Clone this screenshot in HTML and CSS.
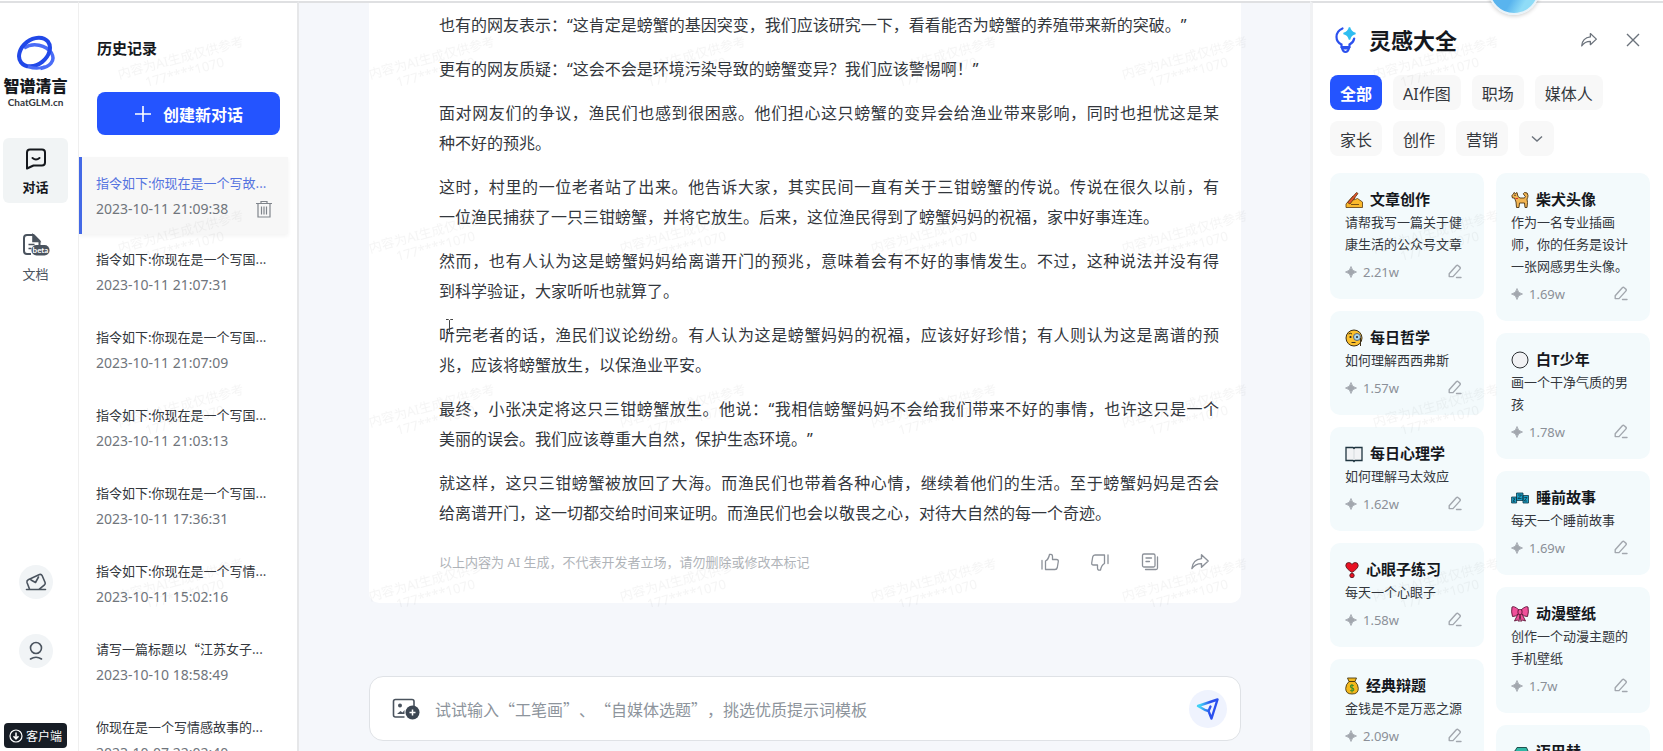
FILE: index.html
```html
<!DOCTYPE html>
<html lang="zh-CN">
<head>
  <meta charset="UTF-8" />
  <meta name="viewport" content="width=device-width, initial-scale=1.0" />
  <title>智谱清言</title>
  <link rel="stylesheet" href="styles.css">
</head>
<body>

  <!-- shared icons -->
  <svg class="sprite" aria-hidden="true">
    <symbol id="icon-share" viewBox="0 0 20 20">
      <path d="M11.5 2.8 18.2 9l-6.7 6.2v-3.6c-4.2 0-7.2 1.4-9.6 5 .4-5.300 3.400-9.300 9.600-10z" fill="none" stroke="currentColor" stroke-width="1.4" stroke-linejoin="round"/>
    </symbol>
    <symbol id="icon-star" viewBox="0 0 12 12">
      <path d="M6 0.500Q6.800 5.200 11.500 6 6.800 6.800 6 11.500 5.200 6.800.5 6 5.200 5.200 6 .5z" fill="currentColor" stroke="currentColor" stroke-width="0.800"/>
    </symbol>
    <symbol id="icon-edit" viewBox="0 0 16 16">
      <path d="M2.200 9.800 9.300 1.800q1-1 2 0l1.500 1.300q1 1 0 2L6 12.600H2.200zM9.500 13.500h4.500" fill="none" stroke="currentColor" stroke-width="1.400" stroke-linecap="round" stroke-linejoin="round"/>
    </symbol>
  </svg>

  <div class="app">
    <nav class="rail">
      <a class="logo" href="#">
        <svg width="40" height="36" viewBox="0 0 40 36" fill="none">
          <path d="M8 13c9-6 22-3 27.500 5 4.500 8-2 14-11 15.500" stroke="#4a6cf7" stroke-width="3.500"/>
          <ellipse cx="18.500" cy="17" rx="17" ry="12.500" transform="rotate(-38 18.500 17)" stroke="#2148e8" stroke-width="4"/>
          <path d="M12 31.500q9 3.500 17 0" stroke="#4a6cf7" stroke-width="3"/>
        </svg>
        <span class="logo-name">智谱清言</span>
        <span class="logo-site">ChatGLM.cn</span>
      </a>

      <a class="tab active" href="#">
        <svg width="22" height="22" viewBox="0 0 22 22" fill="none" stroke="#15181d" stroke-width="2" stroke-linecap="round" stroke-linejoin="round">
          <path d="M5 1.500h12q3 0 3 3v10q0 3-3 3H8.500L2 20.500V4.500q0-3 3-3z"/>
          <path d="M7.500 10q3.500 3 7 0"/>
        </svg>
        <span>对话</span>
      </a>

      <a class="tab" href="#">
        <svg width="28" height="24" viewBox="0 0 28 24" fill="none">
          <path d="M9 21H5q-3 0-3-3V5q0-3 3-3h6.500l6 6v4" stroke="#4a535e" stroke-width="2" stroke-linejoin="round"/>
          <path d="M11 2v6.500h6.500zM6.500 11.500h6M6.500 15.500h3" stroke="#4a535e" stroke-width="1.600" fill="#4a535e"/>
          <rect x="9.500" y="12" width="18" height="10.500" rx="5" fill="#4a535e"/>
          <text x="18.500" y="20" text-anchor="middle" class="beta">beta</text>
        </svg>
        <span>文档</span>
      </a>

      <div class="rail-bottom">
        <button class="round" type="button" aria-label="反馈">
          <svg width="22" height="20" viewBox="0 0 22 20" fill="none" stroke="#4a535e" stroke-width="1.600" stroke-linecap="round" stroke-linejoin="round">
            <path d="M1.500 17.500h19M4.500 17 2 10.500q-.5-2 1.200-2.800L14.500 2.500q1.800-.6 2.600 1l3 7q.5 1.500-.6 2.300L14 17.300M6 8l4.500 2.500L13.500 5"/>
          </svg>
        </button>
        <button class="round" type="button" aria-label="个人中心">
          <svg width="16" height="20" viewBox="0 0 16 20" fill="none" stroke="#4a535e" stroke-width="1.600" stroke-linecap="round">
            <circle cx="8" cy="7" r="5.500"/>
            <path d="M2.500 18q5.500-3.500 11 0"/>
          </svg>
        </button>
        <button class="client" type="button">
          <svg width="14" height="14" viewBox="0 0 14 14" fill="none" stroke="#fff" stroke-width="1.200">
            <circle cx="7" cy="7" r="6"/>
            <path d="M7 3.500v6M4.500 7.200 7 9.800l2.500-2.600" stroke-width="1.500"/>
          </svg>
          客户端
        </button>
      </div>
    </nav>

    <aside class="history">
      <h2>历史记录</h2>
      <button class="new-chat" type="button">
        <svg width="18" height="18" viewBox="0 0 18 18" stroke="#fff" stroke-width="1.600">
          <path d="M9 1v16M1 9h16"/>
        </svg>
        创建新对话
      </button>

      <ul class="history-list">
        <li class="current">
          <a href="#">指令如下:你现在是一个写故...</a>
          <div class="row">
            <time>2023-10-11 21:09:38</time>
            <button class="icon-btn" type="button" aria-label="删除">
              <svg width="18" height="18" viewBox="0 0 18 18" fill="none" stroke="#80858c" stroke-width="1.200">
                <path d="M1 3.500h16M6 3.500v-2h6v2M3 3.500v13.500h12V3.500M6.500 6.500v8M9 6.500v8M11.500 6.500v8"/>
              </svg>
            </button>
          </div>
        </li>
        <li>
          <a href="#">指令如下:你现在是一个写国...</a>
          <time>2023-10-11 21:07:31</time>
        </li>
        <li>
          <a href="#">指令如下:你现在是一个写国...</a>
          <time>2023-10-11 21:07:09</time>
        </li>
        <li>
          <a href="#">指令如下:你现在是一个写国...</a>
          <time>2023-10-11 21:03:13</time>
        </li>
        <li>
          <a href="#">指令如下:你现在是一个写国...</a>
          <time>2023-10-11 17:36:31</time>
        </li>
        <li>
          <a href="#">指令如下:你现在是一个写情...</a>
          <time>2023-10-11 15:02:16</time>
        </li>
        <li>
          <a href="#">请写一篇标题以“江苏女子...</a>
          <time>2023-10-10 18:58:49</time>
        </li>
        <li>
          <a href="#">你现在是一个写情感故事的...</a>
          <time>2023-10-07 22:02:40</time>
        </li>
      </ul>
    </aside>

    <main class="chat">
      <article class="message">
        <div class="message-text">
          <p>也有的网友表示：“这肯定是螃蟹的基因突变，我们应该研究一下，看看能否为螃蟹的养殖带来新的突破。”</p>
          <p>更有的网友质疑：“这会不会是环境污染导致的螃蟹变异？我们应该警惕啊！”</p>
          <p>面对网友们的争议，渔民们也感到很困惑。他们担心这只螃蟹的变异会给渔业带来影响，同时也担忧这是某<span class="keep">种不好</span>的预兆。</p>
          <p>这时，村里的一位老者站了出来。他告诉大家，其实民间一直有关于三钳螃蟹的传说。传说在很久以前，有<span class="keep">一位渔民</span>捕获了一只三钳螃蟹，并将它放生。后来，这位渔民得到了螃蟹妈妈的祝福，家中好事连连。</p>
          <p>然而，也有人认为这是螃蟹妈妈给离谱开门的预兆，意味着会有不好的事情发生。不过，这种说法并没有得<span class="keep">到科学</span>验证，大家听听也就算了。</p>
          <p>听完老者的话，渔民们议论纷纷。有人认为这是螃蟹妈妈的祝福，应该好好珍惜；有人则认为这是离谱的预<span class="keep">兆，应该</span>将螃蟹放生，以保渔业平安。</p>
          <p>最终，小张决定将这只三钳螃蟹放生。他说：“我相信螃蟹妈妈不会给我们带来不好的事情，也许这只是一个<span class="keep">美丽的</span>误会。我们应该尊重大自然，保护生态环境。”</p>
          <p>就这样，这只三钳螃蟹被放回了大海。而渔民们也带着各种心情，继续着他们的生活。至于螃蟹妈妈是否会<span class="keep">给离谱</span>开门，这一切都交给时间来证明。而渔民们也会以敬畏之心，对待大自然的每一个奇迹。</p>
        </div>
        <footer class="message-footer">
          <span>以上内容为 AI 生成，不代表开发者立场，请勿删除或修改本标记</span>
          <div class="actions">
            <button class="icon-btn" type="button" aria-label="赞">
              <svg width="20" height="20" viewBox="0 0 20 20" fill="none" stroke="currentColor" stroke-width="1.300" stroke-linejoin="round" stroke-linecap="round">
                <path d="M2 8.500V17M5.500 9q3-1.500 4-6.500 3-.8 3 2V7.500h4q2 0 1.800 2l-1 6q-.4 2-2.300 2H5.500z"/>
              </svg>
            </button>
            <button class="icon-btn" type="button" aria-label="踩">
              <svg width="20" height="20" viewBox="0 0 20 20" fill="none" stroke="currentColor" stroke-width="1.300" stroke-linejoin="round" stroke-linecap="round">
                <path d="M18 3v8.500M14.500 11.500q-3 1.500-4 6.500-3 .8-3-2v-3h-4q-2 0-1.800-2l1-6q.4-2 2.300-2h9.500z"/>
              </svg>
            </button>
            <button class="icon-btn" type="button" aria-label="复制">
              <svg width="20" height="20" viewBox="0 0 20 20" fill="none" stroke="currentColor" stroke-width="1.300" stroke-linecap="round">
                <rect x="2.500" y="2" width="12.500" height="13" rx="1.500"/>
                <path d="M5.500 17.500H16q1.500 0 1.500-1.500V5M6 6h5.500M6 9.500h3.500"/>
              </svg>
            </button>
            <button class="icon-btn" type="button" aria-label="分享">
              <svg width="20" height="20"><use href="#icon-share"/></svg>
            </button>
          </div>
        </footer>
      </article>

      <form class="composer">
        <button class="icon-btn" type="button" aria-label="上传图片">
          <svg width="28" height="24" viewBox="0 0 28 24" fill="none">
            <path d="M12.500 20H3.500Q1.500 20 1.500 18V4.500q0-2 2-2h16.500q2 0 2 2V9" stroke="#4a535e" stroke-width="1.600"/>
            <circle cx="8" cy="8.500" r="2" fill="#4a535e"/>
            <path d="M5 17l3.500-3 2 1.500 2-2.500v4z" fill="#4a535e"/>
            <circle cx="20.500" cy="15.500" r="7" fill="#3c4652"/>
            <path d="M20.500 12.500v6M17.500 15.500h6" stroke="#fff" stroke-width="1.500"/>
          </svg>
        </button>
        <input type="text" aria-label="输入消息" placeholder="试试输入“工笔画”、“自媒体选题”，挑选优质提示词模板">
        <button class="send" type="submit" aria-label="发送">
          <svg width="24" height="24" viewBox="0 0 24 24" fill="none" stroke-width="2.400" stroke-linejoin="round" stroke-linecap="round">
            <defs>
              <linearGradient id="send-line" x1="2" y1="9" x2="14" y2="10" gradientUnits="userSpaceOnUse">
                <stop offset="0.200" stop-color="#3fd0f5"/>
                <stop offset="1" stop-color="#2b50ee"/>
              </linearGradient>
            </defs>
            <path d="M12.500 14 9.500 13.200 2 9 21.500 2.500 15.500 21.500 12.500 14 14.500 9.500" stroke="url(#send-line)"/>
          </svg>
        </button>
      </form>
    </main>

    <aside class="ideas">
      <header class="ideas-header">
        <svg width="24" height="28" viewBox="0 0 24 28" fill="none">
          <path d="M8.500 2.500Q2.500 5 2.500 11q0 5 5 7.500V21h8v-2.500q4-2 4.700-6" stroke="#2b50ee" stroke-width="2.200" stroke-linecap="round"/>
          <path d="M8 22.500q1 3.500 3.500 3.500t3.500-3.500z" stroke="#2b50ee" stroke-width="2" fill="none"/>
          <path d="M15.500 1.500q1 5 6 6-5 1-6 6-1-5-6-6 5-1 6-6z" fill="#2fbdf0" stroke="#2fbdf0" stroke-width="1.500"/>
        </svg>
        <h1>灵感大全</h1>
        <button class="icon-btn" type="button" aria-label="分享">
          <svg width="18" height="18"><use href="#icon-share"/></svg>
        </button>
        <button class="icon-btn" type="button" aria-label="关闭">
          <svg width="16" height="16" viewBox="0 0 16 16" stroke="currentColor" stroke-width="1.400">
            <path d="M2 2l12 12M14 2 2 14"/>
          </svg>
        </button>
      </header>

      <div class="chips">
        <button class="chip selected" type="button">全部</button>
        <button class="chip" type="button">AI作图</button>
        <button class="chip" type="button">职场</button>
        <button class="chip" type="button">媒体人</button>
        <button class="chip" type="button">家长</button>
        <button class="chip" type="button">创作</button>
        <button class="chip" type="button">营销</button>
        <button class="chip more" type="button" aria-label="更多">
          <svg width="12" height="8" viewBox="0 0 12 8" fill="none" stroke="#6b727b" stroke-width="1.400"><path d="M1 1.500l5 4.500 5-4.500"/></svg>
        </button>
      </div>

      <div class="columns">
        <div class="column">
          <section class="card">
            <h3>
              <svg width="18" height="18" viewBox="0 0 18 18" stroke="#5a3a10" stroke-width="0.800" stroke-linejoin="round">
                <path d="M1 16.500V13l7-8 2 1.500L8.500 9l4-1.500 5 3.500v5.500z" fill="#fbb92c"/>
                <path d="M2.500 11.500 11.500 1.500l1.500 1-8 10.500z" fill="#e4502e"/>
                <path d="M6 13.500h8" fill="none"/>
              </svg>
              文章创作
            </h3>
            <p>请帮我写一篇关于健康生活的公众号文章</p>
            <div class="meta">
              <span><svg width="12" height="12"><use href="#icon-star"/></svg>2.21w</span>
              <button class="icon-btn" type="button" aria-label="编辑"><svg width="16" height="16"><use href="#icon-edit"/></svg></button>
            </div>
          </section>
          <section class="card">
            <h3>
              <svg width="18" height="18" viewBox="0 0 18 18">
                <circle cx="9" cy="9" r="8" fill="#fbc02d" stroke="#3c3019"/>
                <circle cx="12" cy="8" r="3.500" fill="#a9d6ee" stroke="#5b6470"/>
                <circle cx="12" cy="8" r="1" fill="#222"/>
                <circle cx="5.500" cy="8" r="1.100" fill="#222"/>
                <path d="M3.500 5q2-1.500 3.500 0M6.500 13.500h4M15.500 9v8" stroke="#3c3019" fill="none"/>
              </svg>
              每日哲学
            </h3>
            <p>如何理解西西弗斯</p>
            <div class="meta">
              <span><svg width="12" height="12"><use href="#icon-star"/></svg>1.57w</span>
              <button class="icon-btn" type="button" aria-label="编辑"><svg width="16" height="16"><use href="#icon-edit"/></svg></button>
            </div>
          </section>
          <section class="card">
            <h3>
              <svg width="18" height="18" viewBox="0 0 18 18">
                <path d="M1 2.500h7l1 1 1-1h7v13h-7l-1 1-1-1H1z" fill="#f2f3f5" stroke="#1f3540" stroke-width="1.300"/>
                <path d="M9 4.500v10" stroke="#d5dadd"/>
              </svg>
              每日心理学
            </h3>
            <p>如何理解马太效应</p>
            <div class="meta">
              <span><svg width="12" height="12"><use href="#icon-star"/></svg>1.62w</span>
              <button class="icon-btn" type="button" aria-label="编辑"><svg width="16" height="16"><use href="#icon-edit"/></svg></button>
            </div>
          </section>
          <section class="card">
            <h3>
              <svg width="14" height="18" viewBox="0 0 14 18" fill="#e81224" stroke="#4a1015" stroke-width="0.800">
                <path d="M7 11.500Q.8 7.500.8 4.500.8 1.500 3.800 1.500 6 1.500 7 3.500 8 1.500 10.200 1.500q3 0 3 3 0 3-6.200 7z"/>
                <circle cx="7" cy="14.500" r="2.200"/>
              </svg>
              心眼子练习
            </h3>
            <p>每天一个心眼子</p>
            <div class="meta">
              <span><svg width="12" height="12"><use href="#icon-star"/></svg>1.58w</span>
              <button class="icon-btn" type="button" aria-label="编辑"><svg width="16" height="16"><use href="#icon-edit"/></svg></button>
            </div>
          </section>
          <section class="card">
            <h3>
              <svg width="14" height="18" viewBox="0 0 14 18" stroke="#4a3a10" stroke-width="0.900">
                <path d="M2.500 1h9L10 4.500H4zM4 4.500Q.7 7.500.7 11.500q0 5.500 6.300 5.500t6.300-5.500q0-4-3.300-7z" fill="#f3b81c"/>
                <path d="M8.800 8.500Q5 7.500 5.500 9.800q.3 1 1.800 1.300 1.700.4 1.500 1.700-.5 1.700-3.600.7M7 7v8.500" fill="none" stroke="#3f8f2a" stroke-width="1.100"/>
              </svg>
              经典辩题
            </h3>
            <p>金钱是不是万恶之源</p>
            <div class="meta">
              <span><svg width="12" height="12"><use href="#icon-star"/></svg>2.09w</span>
              <button class="icon-btn" type="button" aria-label="编辑"><svg width="16" height="16"><use href="#icon-edit"/></svg></button>
            </div>
          </section>
        </div>

        <div class="column">
          <section class="card">
            <h3>
              <svg width="18" height="18" viewBox="0 0 18 18">
                <path d="M.8 4.500 2.500 3 3 1.500l1.500 1 1.500-1L7 5.500l2 1.500h4.500Q15.500 5 13 4q-1.500-1.500.5-2.500 3.500-.5 3.500 3 0 2-1 3.500l.5 3.500-.5 5h-2l-.5-4.500H8.500l-.5 4.500H5.500L5 11 3.500 7H1.500z" fill="#f2b552" stroke="#4a3312" stroke-width="0.900" stroke-linejoin="round"/>
                <circle cx="4" cy="4.300" r="0.700" fill="#222"/>
                <path d="M4.500 7.500h2.500" stroke="#d9342b"/>
              </svg>
              柴犬头像
            </h3>
            <p>作为一名专业插画师，你的任务是设计一张网感男生头像。</p>
            <div class="meta">
              <span><svg width="12" height="12"><use href="#icon-star"/></svg>1.69w</span>
              <button class="icon-btn" type="button" aria-label="编辑"><svg width="16" height="16"><use href="#icon-edit"/></svg></button>
            </div>
          </section>
          <section class="card">
            <h3>
              <svg width="18" height="18" viewBox="0 0 18 18"><circle cx="9" cy="9" r="8" fill="#f1f2f4" stroke="#2b2f33"/></svg>
              白T少年
            </h3>
            <p>画一个干净气质的男孩</p>
            <div class="meta">
              <span><svg width="12" height="12"><use href="#icon-star"/></svg>1.78w</span>
              <button class="icon-btn" type="button" aria-label="编辑"><svg width="16" height="16"><use href="#icon-edit"/></svg></button>
            </div>
          </section>
          <section class="card">
            <h3>
              <svg width="18" height="18" viewBox="0 0 18 18" fill="#1b9dc4" stroke="#0e3644" stroke-width="0.800">
                <path d="M.6 8h5v6h-5zM5.500 4h6.500v7.500H5.500zM12 6.500h5.500V14H12z"/>
                <path d="M2 9.800h2L2 12.300h2M7 6h3.500L7 9.500h3.500M13.300 8.500h2.700l-2.700 3.500H16" fill="none"/>
              </svg>
              睡前故事
            </h3>
            <p>每天一个睡前故事</p>
            <div class="meta">
              <span><svg width="12" height="12"><use href="#icon-star"/></svg>1.69w</span>
              <button class="icon-btn" type="button" aria-label="编辑"><svg width="16" height="16"><use href="#icon-edit"/></svg></button>
            </div>
          </section>
          <section class="card">
            <h3>
              <svg width="18" height="18" viewBox="0 0 18 18" fill="#f0509a" stroke="#5c1236" stroke-width="0.900" stroke-linejoin="round">
                <path d="M7.500 8 3.500 16l3-1 1.500 1.500L9 9l1 7.500 1.500-1.500 3 1-4-8z"/>
                <path d="M8 5Q3 .5 1 2q-1 5 .5 9.500Q4 12 8 8.500zM10 5q5-4.500 7-3 1 5-.5 9.500-2.500.5-6.500-3z"/>
                <rect x="7" y="4.500" width="4" height="5" rx="1.500"/>
              </svg>
              动漫壁纸
            </h3>
            <p>创作一个动漫主题的手机壁纸</p>
            <div class="meta">
              <span><svg width="12" height="12"><use href="#icon-star"/></svg>1.7w</span>
              <button class="icon-btn" type="button" aria-label="编辑"><svg width="16" height="16"><use href="#icon-edit"/></svg></button>
            </div>
          </section>
          <section class="card">
            <h3>
              <svg width="18" height="18" viewBox="0 0 18 18" stroke="#12423e" stroke-width="0.900">
                <path d="M1 14V9.500L4 8l2-3.500h9.500L17 8v6z" fill="#2fb8a6"/>
                <circle cx="5" cy="14" r="2" fill="#333"/>
                <circle cx="13.500" cy="14" r="2" fill="#333"/>
              </svg>
              迈巴赫
            </h3>
          </section>
        </div>
      </div>
    </aside>
  </div>

  <div class="bubble"></div>

  <svg class="pointer" width="9" height="16" viewBox="0 0 9 16" fill="none" stroke="#444" aria-hidden="true">
    <path d="M1 1.500h2.500l1 1 1-1H8M4.500 2.500v11M1 14.500h2.500l1-1 1 1H8"/>
  </svg>

  <!-- watermark over the whole page -->
  <svg class="watermark" aria-hidden="true">
    <defs>
      <pattern id="mark" x="115" y="30" width="251" height="174" patternUnits="userSpaceOnUse">
        <g transform="rotate(-15 68 36)">
          <text x="68" y="32" text-anchor="middle">内容为AI生成仅供参考</text>
          <text x="68" y="47" text-anchor="middle">177****1070</text>
        </g>
      </pattern>
    </defs>
    <rect width="100%" height="100%" fill="url(#mark)"/>
  </svg>

</body>
</html>
```
FILE: styles.css
```css
* {
  box-sizing: border-box;
}

body {
  margin: 0;
  font-family: "Noto Sans", "Noto Sans CJK SC", sans-serif;
  font-size: 13px;
  color: #33373d;
  background: #fff;
  overflow: hidden;
}

h1, h2, h3, p, ul {
  margin: 0;
  padding: 0;
}

a {
  color: inherit;
  text-decoration: none;
}

button {
  font: inherit;
  color: inherit;
  border: none;
  background: none;
  padding: 0;
  cursor: pointer;
}

svg {
  display: block;
  flex: none;
}

.sprite {
  position: absolute;
  width: 0;
  height: 0;
}

.icon-btn {
  display: flex;
}

.app {
  display: flex;
  height: 100vh;
  padding-top: 1px;
}

.app > * {
  border-top: 2px solid #dfe0e2;
}

/* left rail */
.rail {
  width: 79px;
  flex: none;
  display: flex;
  flex-direction: column;
  align-items: flex-start;
  padding: 32px 0 3px 3px;
  border-right: 1px solid #efefef;
}

.logo {
  width: 65px;
  display: flex;
  flex-direction: column;
  align-items: center;
  margin-bottom: 30px;
}

.logo-name {
  margin-top: 5px;
  font-size: 16px;
  line-height: 20px;
  font-weight: 900;
  color: #15181d;
}

.logo-site {
  font-family: Lato, sans-serif;
  font-size: 10px;
  line-height: 12px;
  font-weight: bold;
}

.tab {
  width: 65px;
  height: 65px;
  display: flex;
  flex-direction: column;
  align-items: center;
  justify-content: center;
  gap: 7px;
  padding-top: 2px;
  border-radius: 6px;
  margin-bottom: 21px;
  color: #4a535e;
}

.tab.active {
  background: #f1f4f5;
  color: #15181d;
  font-weight: bold;
}

.beta {
  font-family: Lato, sans-serif;
  font-size: 8px;
  font-weight: bold;
  fill: #fff;
}

.rail-bottom {
  width: 65px;
  margin-top: auto;
  display: flex;
  flex-direction: column;
  align-items: center;
}

.round {
  width: 34px;
  height: 34px;
  border-radius: 50%;
  background: #f1f4f6;
  display: flex;
  align-items: center;
  justify-content: center;
  margin-bottom: 35px;
}

.client {
  width: 63px;
  height: 25px;
  border-radius: 4px;
  background: #171d25;
  color: #fff;
  font-size: 12px;
  margin-top: 20px;
  display: flex;
  align-items: center;
  justify-content: center;
  gap: 3px;
}

/* history */
.history {
  width: 220px;
  flex: none;
  overflow: hidden;
  border-right: 2px solid #e6e7e9;
}

.history h2 {
  padding: 35px 18px 0;
  font-size: 15px;
  line-height: 20px;
  color: #15181d;
}

.new-chat {
  width: 183px;
  height: 43px;
  margin: 34px 18px 22px;
  border-radius: 8px;
  background: #2454ff;
  color: #fff;
  font-size: 16px;
  font-weight: bold;
  display: flex;
  align-items: center;
  justify-content: center;
  gap: 11px;
}

.history-list {
  list-style: none;
}

.history-list li {
  height: 78px;
  margin-right: 9px;
  padding: 12px 15px 13px 14px;
  border-left: 3px solid transparent;
  line-height: 26px;
}

.history-list a {
  display: block;
  font-family: "Noto Sans CJK SC", sans-serif;
  text-spacing-trim: space-all;
  white-space: nowrap;
}

.history-list time {
  font-size: 14px;
  color: #70757c;
}

.history-list .current {
  height: 77px;
  padding-top: 13px;
  background: #f7f7f7;
  border-left-color: #4469e6;
  box-shadow: 0 2px 4px rgba(0, 0, 0, 0.05);
}

.history-list .current a {
  color: #5573e0;
}

.row {
  display: flex;
  align-items: center;
  justify-content: space-between;
}

/* chat */
.chat {
  flex: 1;
  min-width: 0;
  display: flex;
  flex-direction: column;
  justify-content: space-between;
  padding: 0 69px 10px 70px;
  background: #f5f7fb;
}

.message {
  background: #fff;
  border-radius: 0 0 10px 10px;
  padding: 7px 22px 30px 70px;
}

.message-text {
  font-size: 16px;
  line-height: 30px;
  text-align: justify;
  text-spacing-trim: space-all;
}

.message-text p + p {
  margin-top: 14px;
}

.keep {
  white-space: nowrap;
}

.message-footer {
  display: flex;
  align-items: center;
  justify-content: space-between;
  margin-top: 23px;
  line-height: 22px;
  color: #b0b4b9;
}

.actions {
  display: flex;
  gap: 30px;
  padding-right: 9px;
  color: #8c9199;
}

.composer {
  height: 65px;
  display: flex;
  align-items: center;
  gap: 15px;
  padding: 0 13px 0 22px;
  background: #fff;
  border: 1px solid #dfe2e6;
  border-radius: 14px;
}

.composer input {
  flex: 1;
  min-width: 0;
  border: none;
  outline: none;
  padding: 0;
  font-family: "Noto Sans CJK SC", sans-serif;
  font-size: 16px;
  text-spacing-trim: space-all;
  background: none;
}

.composer input::placeholder {
  color: #8d949c;
}

.send {
  width: 38px;
  height: 38px;
  border-radius: 50%;
  background: #eff3fe;
  display: flex;
  align-items: center;
  justify-content: center;
}

/* ideas panel */
.ideas {
  width: 353px;
  flex: none;
  overflow: hidden;
  padding: 0 13px 0 17px;
  border-left: 3px solid #f0f1f3;
}

.ideas-header {
  display: flex;
  align-items: center;
  padding: 19px 9px 0 4px;
  color: #6b727b;
}

.ideas-header h1 {
  flex: 1;
  margin-left: 11px;
  font-size: 22px;
  line-height: 36px;
  color: #15181d;
}

.ideas-header .icon-btn + .icon-btn {
  margin-left: 27px;
}

.chips {
  display: flex;
  flex-wrap: wrap;
  gap: 11px;
  padding: 17px 30px 17px 0;
}

.chip {
  height: 35px;
  padding: 0 10px;
  border-radius: 8px;
  background: #f8f8f8;
  font-size: 16px;
}

.chip.selected {
  background: #2454ff;
  color: #fff;
  font-weight: bold;
}

.chip.more {
  width: 35px;
  display: flex;
  align-items: center;
  justify-content: center;
}

.columns {
  display: flex;
  gap: 12px;
}

.column {
  flex: 1;
  display: flex;
  flex-direction: column;
  gap: 12px;
}

.card {
  padding: 15px 21px 16px 15px;
  border-radius: 10px;
  background: #f3fafc;
}

.card h3 {
  display: flex;
  align-items: center;
  gap: 7px;
  font-size: 15px;
  line-height: 23px;
  color: #15181d;
}

.card p {
  line-height: 22px;
}

.meta {
  display: flex;
  align-items: center;
  justify-content: space-between;
  margin-top: 6px;
  line-height: 22px;
  color: #8b9098;
}

.meta span {
  display: flex;
  align-items: center;
  gap: 6px;
}

.meta use {
  color: #a2a7ae;
}

/* floating assistant, half out of the window */
.bubble {
  position: absolute;
  top: -37px;
  right: 123px;
  width: 52px;
  height: 52px;
  border: 2px solid #e9f3f9;
  border-radius: 50%;
  background: linear-gradient(120deg, #59b4ee 55%, #8fdcf7 75%);
  box-shadow: 0 1px 4px rgba(0, 0, 0, 0.2);
}

.pointer {
  position: absolute;
  left: 445px;
  top: 318px;
  pointer-events: none;
}

.watermark {
  position: absolute;
  left: 0;
  top: 0;
  width: calc(100% - 140px);
  height: 607px;
  pointer-events: none;
}

.watermark text {
  font-size: 13px;
  fill: rgba(0, 0, 0, 0.04);
}
```
